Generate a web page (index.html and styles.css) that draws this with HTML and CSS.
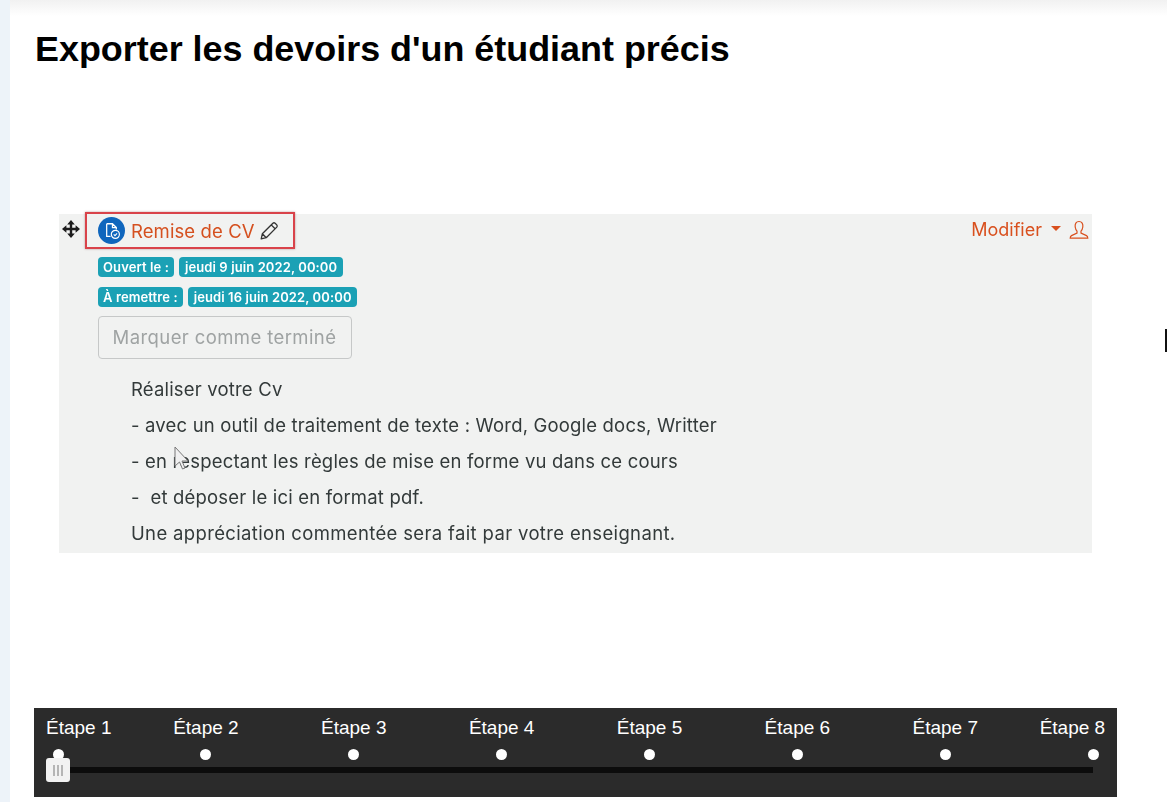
FILE: index.html
```html
<!DOCTYPE html>
<html lang="fr">
<head>
<meta charset="utf-8">
<title>Exporter les devoirs d'un étudiant précis</title>
<link rel="stylesheet" href="styles.css">
</head>
<body>
<div class="page">
  <div class="strip"></div>
  <main class="main">
    <h1 class="title">Exporter les devoirs d'un étudiant précis</h1>
    <section class="frame">
      <div class="head">
        <svg class="move" viewBox="0 0 18 18" width="18" height="18"><path d="M9 0 L12.8 4.4 H10.2 V7.8 H13.6 V5.2 L18 9 L13.6 12.8 V10.2 H10.2 V13.6 H12.8 L9 18 L5.2 13.6 H7.8 V10.2 H4.4 V12.8 L0 9 L4.4 5.2 V7.8 H7.8 V4.4 H5.2 Z" fill="#1c1c1c"/></svg>
        <div class="namebox">
          <svg class="badge-icon" viewBox="0 0 28 28" width="27" height="27"><circle cx="14" cy="14" r="14" fill="#0f66bd"/><path d="M9 7 H15 L19 11 V13 M15 7 V11 H19 M9 7 V20 H13" fill="none" stroke="#fff" stroke-width="1.3"/><circle cx="18" cy="18" r="4.2" fill="none" stroke="#fff" stroke-width="1.2"/><path d="M16.3 18 L17.6 19.3 L19.8 16.9" fill="none" stroke="#fff" stroke-width="1.1"/></svg>
          <span class="name">Remise de CV</span>
          <svg class="pencil" viewBox="0 0 18 18" width="20" height="20"><path d="M2 16 L3 11.5 L12.5 2 Q13.5 1.2 14.5 2 L16 3.5 Q16.8 4.5 16 5.5 L6.5 15 Z M3 11.5 L6.5 15 M11 3.5 L14.5 7" fill="none" stroke="#333" stroke-width="1.2" stroke-linejoin="round"/></svg>
        </div>
        <div class="actions">
          <span class="modifier">Modifier</span>
          <span class="caret"></span>
          <svg class="user" viewBox="0 0 20 20" width="20" height="20"><path d="M10 1.5 C7 1.5 5.8 4 6.2 7 C6.5 9.2 7.3 10.5 8 11.2 V13 L2.5 15.6 Q1.2 16.3 1.2 18.2 H18.8 Q18.8 16.3 17.5 15.6 L12 13 V11.2 C12.7 10.5 13.5 9.2 13.8 7 C14.2 4 13 1.5 10 1.5 Z" fill="none" stroke="#d9501e" stroke-width="1.2"/></svg>
        </div>
      </div>
      <div class="dates">
        <div class="date-row"><span class="tag">Ouvert le :</span><span class="tag">jeudi 9 juin 2022, 00:00</span></div>
        <div class="date-row"><span class="tag">À remettre :</span><span class="tag">jeudi 16 juin 2022, 00:00</span></div>
        <div class="done">Marquer comme terminé</div>
      </div>
      <div class="desc">
        <p>Réaliser votre Cv</p>
        <p>- avec un outil de traitement de texte : Word, Google docs, Writter</p>
        <p>- en respectant les règles de mise en forme vu dans ce cours</p>
        <p>-&nbsp; et déposer le ici en format pdf.</p>
        <p class="wide">Une appréciation commentée sera fait par votre enseignant.</p>
      </div>
      <svg class="cursor" viewBox="0 0 18 26" width="18" height="26"><path d="M1 1 V20 L5.5 16 L8.5 23 L11 22 L8 15 L14 15 Z" fill="#f0f0f0" stroke="#777" stroke-width="1"/></svg>
    </section>
    <section class="player">
      <div class="labels">
        <span class="label first">Étape 1</span>
        <span class="label">Étape 2</span>
        <span class="label">Étape 3</span>
        <span class="label">Étape 4</span>
        <span class="label">Étape 5</span>
        <span class="label">Étape 6</span>
        <span class="label">Étape 7</span>
        <span class="label last">Étape 8</span>
      </div>
      <div class="dots">
        <i class="dot"></i><i class="dot"></i><i class="dot"></i><i class="dot"></i><i class="dot"></i><i class="dot"></i><i class="dot"></i><i class="dot"></i>
      </div>
      <div class="track"></div>
      <div class="handle"><b></b><b></b><b></b></div>
    </section>
  </main>
  <div class="caretmark"></div>
</div>
</body>
</html>
```

FILE: styles.css
```css
* { box-sizing: border-box; }
html, body { margin: 0; padding: 0; background: #fff; }
.page {
  position: relative;
  display: flex;
  width: 1167px;
  height: 802px;
  overflow: hidden;
  background: linear-gradient(#f1f1f1 0, #fff 16px);
}
.strip { width: 10px; flex: none; background: #edf3f9; }
.main { flex: 1; padding: 0 50px 0 24px; min-width: 0; }
.title {
  margin: 0;
  padding: 29px 0 0 1px;
  font: bold 35.9px/40px "Liberation Sans", Arial, sans-serif;
  color: #000;
}
.frame {
  position: relative;
  width: 1033px;
  height: 339px;
  margin: 145px 0 0 25px;
  background: #f1f2f1;
  font-family: Inter, "Noto Sans", sans-serif;
  color: #333a3a;
  filter: blur(.3px);
}
.head { display: flex; align-items: center; height: 33px; }
.move { margin: -3px 0 0 3px; flex: none; }
.namebox {
  display: flex;
  align-items: center;
  width: 210px;
  height: 37px;
  margin: 0 0 0 5px;
  padding-left: 11px;
  border: 2px solid #d9434a;
  box-shadow: 0 0 2px rgba(120, 60, 60, .5);
}
.badge-icon { flex: none; }
.name { margin-left: 6px; font-size: 18.5px; letter-spacing: .1px; color: #d5501f; white-space: nowrap; }
.pencil { margin-left: 4px; flex: none; }
.actions { margin: -2px 0 0 auto; display: flex; align-items: center; padding-right: 3px; }
.modifier { font-size: 18px; color: #d9501e; }
.caret {
  width: 0; height: 0;
  margin: 0 8px 2px 9px;
  border-left: 5px solid transparent;
  border-right: 5px solid transparent;
  border-top: 5px solid #d9501e;
}
.dates { padding: 10px 0 0 38.5px; }
.date-row { display: flex; gap: 5px; height: 20px; margin-bottom: 10px; }
.tag {
  display: flex;
  align-items: center;
  height: 20px;
  padding: 0 5.5px;
  border-radius: 4px;
  background: #1ba1b5;
  color: #fff;
  font-size: 13px;
  font-weight: 600;
  letter-spacing: .1px;
  white-space: nowrap;
}
.done {
  width: 254px;
  height: 43px;
  margin-top: -1px;
  border: 1px solid #c6c8c8;
  border-radius: 4px;
  color: #9fa3a3;
  font-size: 18.5px;
  letter-spacing: .4px;
  line-height: 41px;
  text-align: center;
  white-space: nowrap;
}
.desc { padding: 12px 0 0 72px; font-size: 18.5px; letter-spacing: .18px; line-height: 36px; }
.desc p { margin: 0; white-space: nowrap; }
.desc .wide { letter-spacing: .35px; }
.cursor { position: absolute; left: 115px; top: 232px; }
.player {
  position: relative;
  width: 1083px;
  height: 89px;
  margin-top: 155px;
  background: #2b2b2b;
  padding-top: 8px;
  font-family: "Liberation Sans", Arial, sans-serif;
  color: #fff;
}
.labels { display: flex; padding-left: 12px; height: 24px; }
.label { flex: none; width: 147.86px; text-align: center; font-size: 19px; line-height: 24px; }
.label.first { width: 86px; text-align: left; }
.label.last { width: 86px; text-align: right; }
.dots { display: flex; justify-content: space-between; margin: 9px 18px 0 18.5px; }
.dot { width: 11px; height: 11px; border-radius: 50%; background: #fff; }
.track { height: 6px; margin: 7px 24px 0; background: #0c0c0c; }
.handle {
  position: absolute;
  left: 12px;
  top: 50px;
  display: flex;
  justify-content: center;
  align-items: center;
  gap: 2px;
  width: 24px;
  height: 24px;
  border-radius: 3px;
  background: #f2f2f2;
}
.handle b { width: 2px; height: 11px; background: #b5b5b5; }
.caretmark { position: absolute; left: 1165px; top: 329px; width: 2px; height: 23px; background: #111; }
```
